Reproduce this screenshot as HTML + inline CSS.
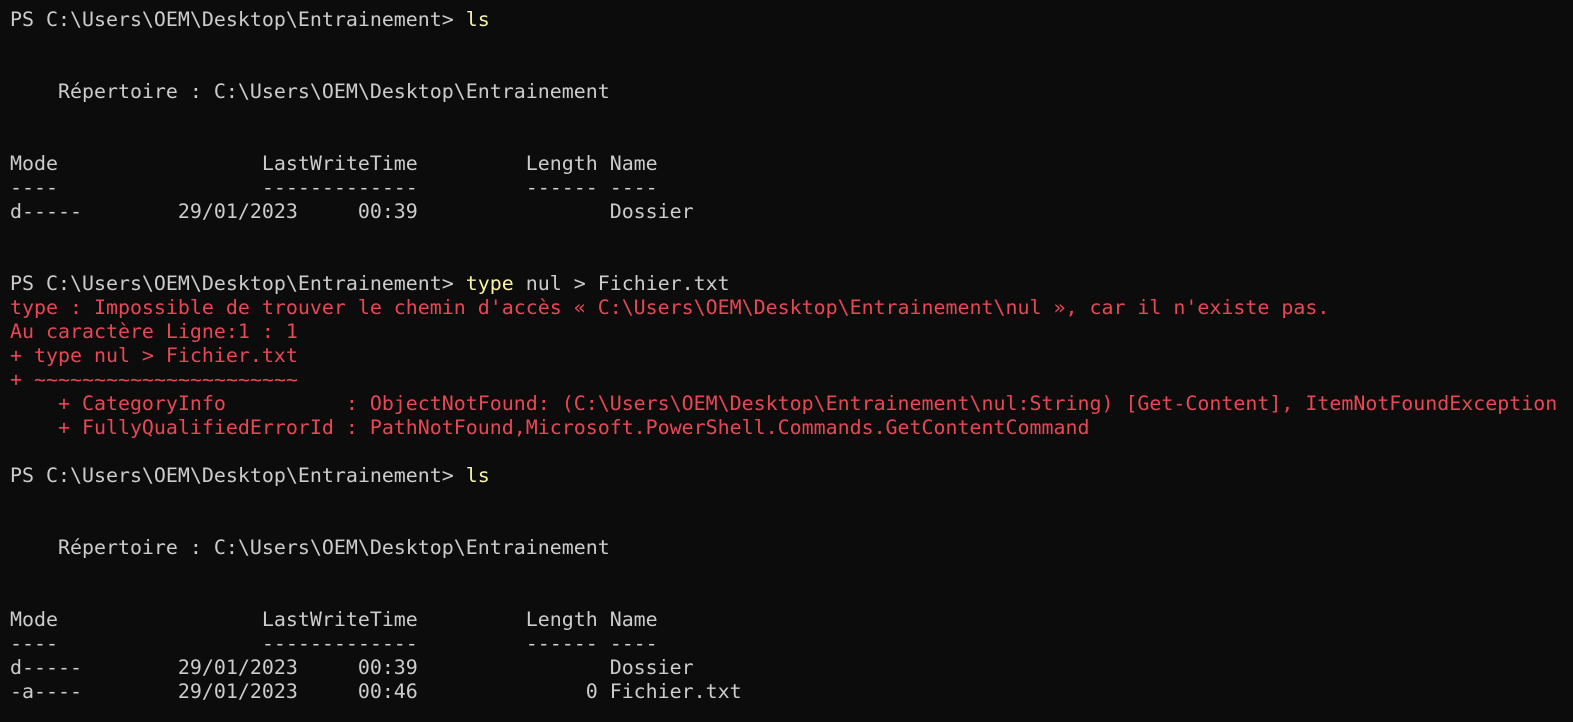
<!DOCTYPE html>
<html><head><meta charset="utf-8"><style>
html,body{margin:0;padding:0;background:#0c0c0c;width:1573px;height:722px;overflow:hidden}
pre{margin:0;padding:8px 0 0 10px;font-family:"DejaVu Sans Mono","Liberation Mono",monospace;font-size:19.93px;line-height:24px;color:#cccccc;white-space:pre}
.y{color:#f9f1a5}.r{color:#e74856}
</style></head><body><pre>PS C:\Users\OEM\Desktop\Entrainement&gt; <span class="y">ls</span>


    Répertoire : C:\Users\OEM\Desktop\Entrainement


Mode                 LastWriteTime         Length Name
----                 -------------         ------ ----
d-----        29/01/2023     00:39                Dossier


PS C:\Users\OEM\Desktop\Entrainement&gt; <span class="y">type</span> nul &gt; Fichier.txt
<span class="r">type : Impossible de trouver le chemin d'accès « C:\Users\OEM\Desktop\Entrainement\nul », car il n'existe pas.
Au caractère Ligne:1 : 1
+ type nul &gt; Fichier.txt
+ ~~~~~~~~~~~~~~~~~~~~~~
    + CategoryInfo          : ObjectNotFound: (C:\Users\OEM\Desktop\Entrainement\nul:String) [Get-Content], ItemNotFoundException
    + FullyQualifiedErrorId : PathNotFound,Microsoft.PowerShell.Commands.GetContentCommand</span>

PS C:\Users\OEM\Desktop\Entrainement&gt; <span class="y">ls</span>


    Répertoire : C:\Users\OEM\Desktop\Entrainement


Mode                 LastWriteTime         Length Name
----                 -------------         ------ ----
d-----        29/01/2023     00:39                Dossier
-a----        29/01/2023     00:46              0 Fichier.txt
</pre></body></html>
